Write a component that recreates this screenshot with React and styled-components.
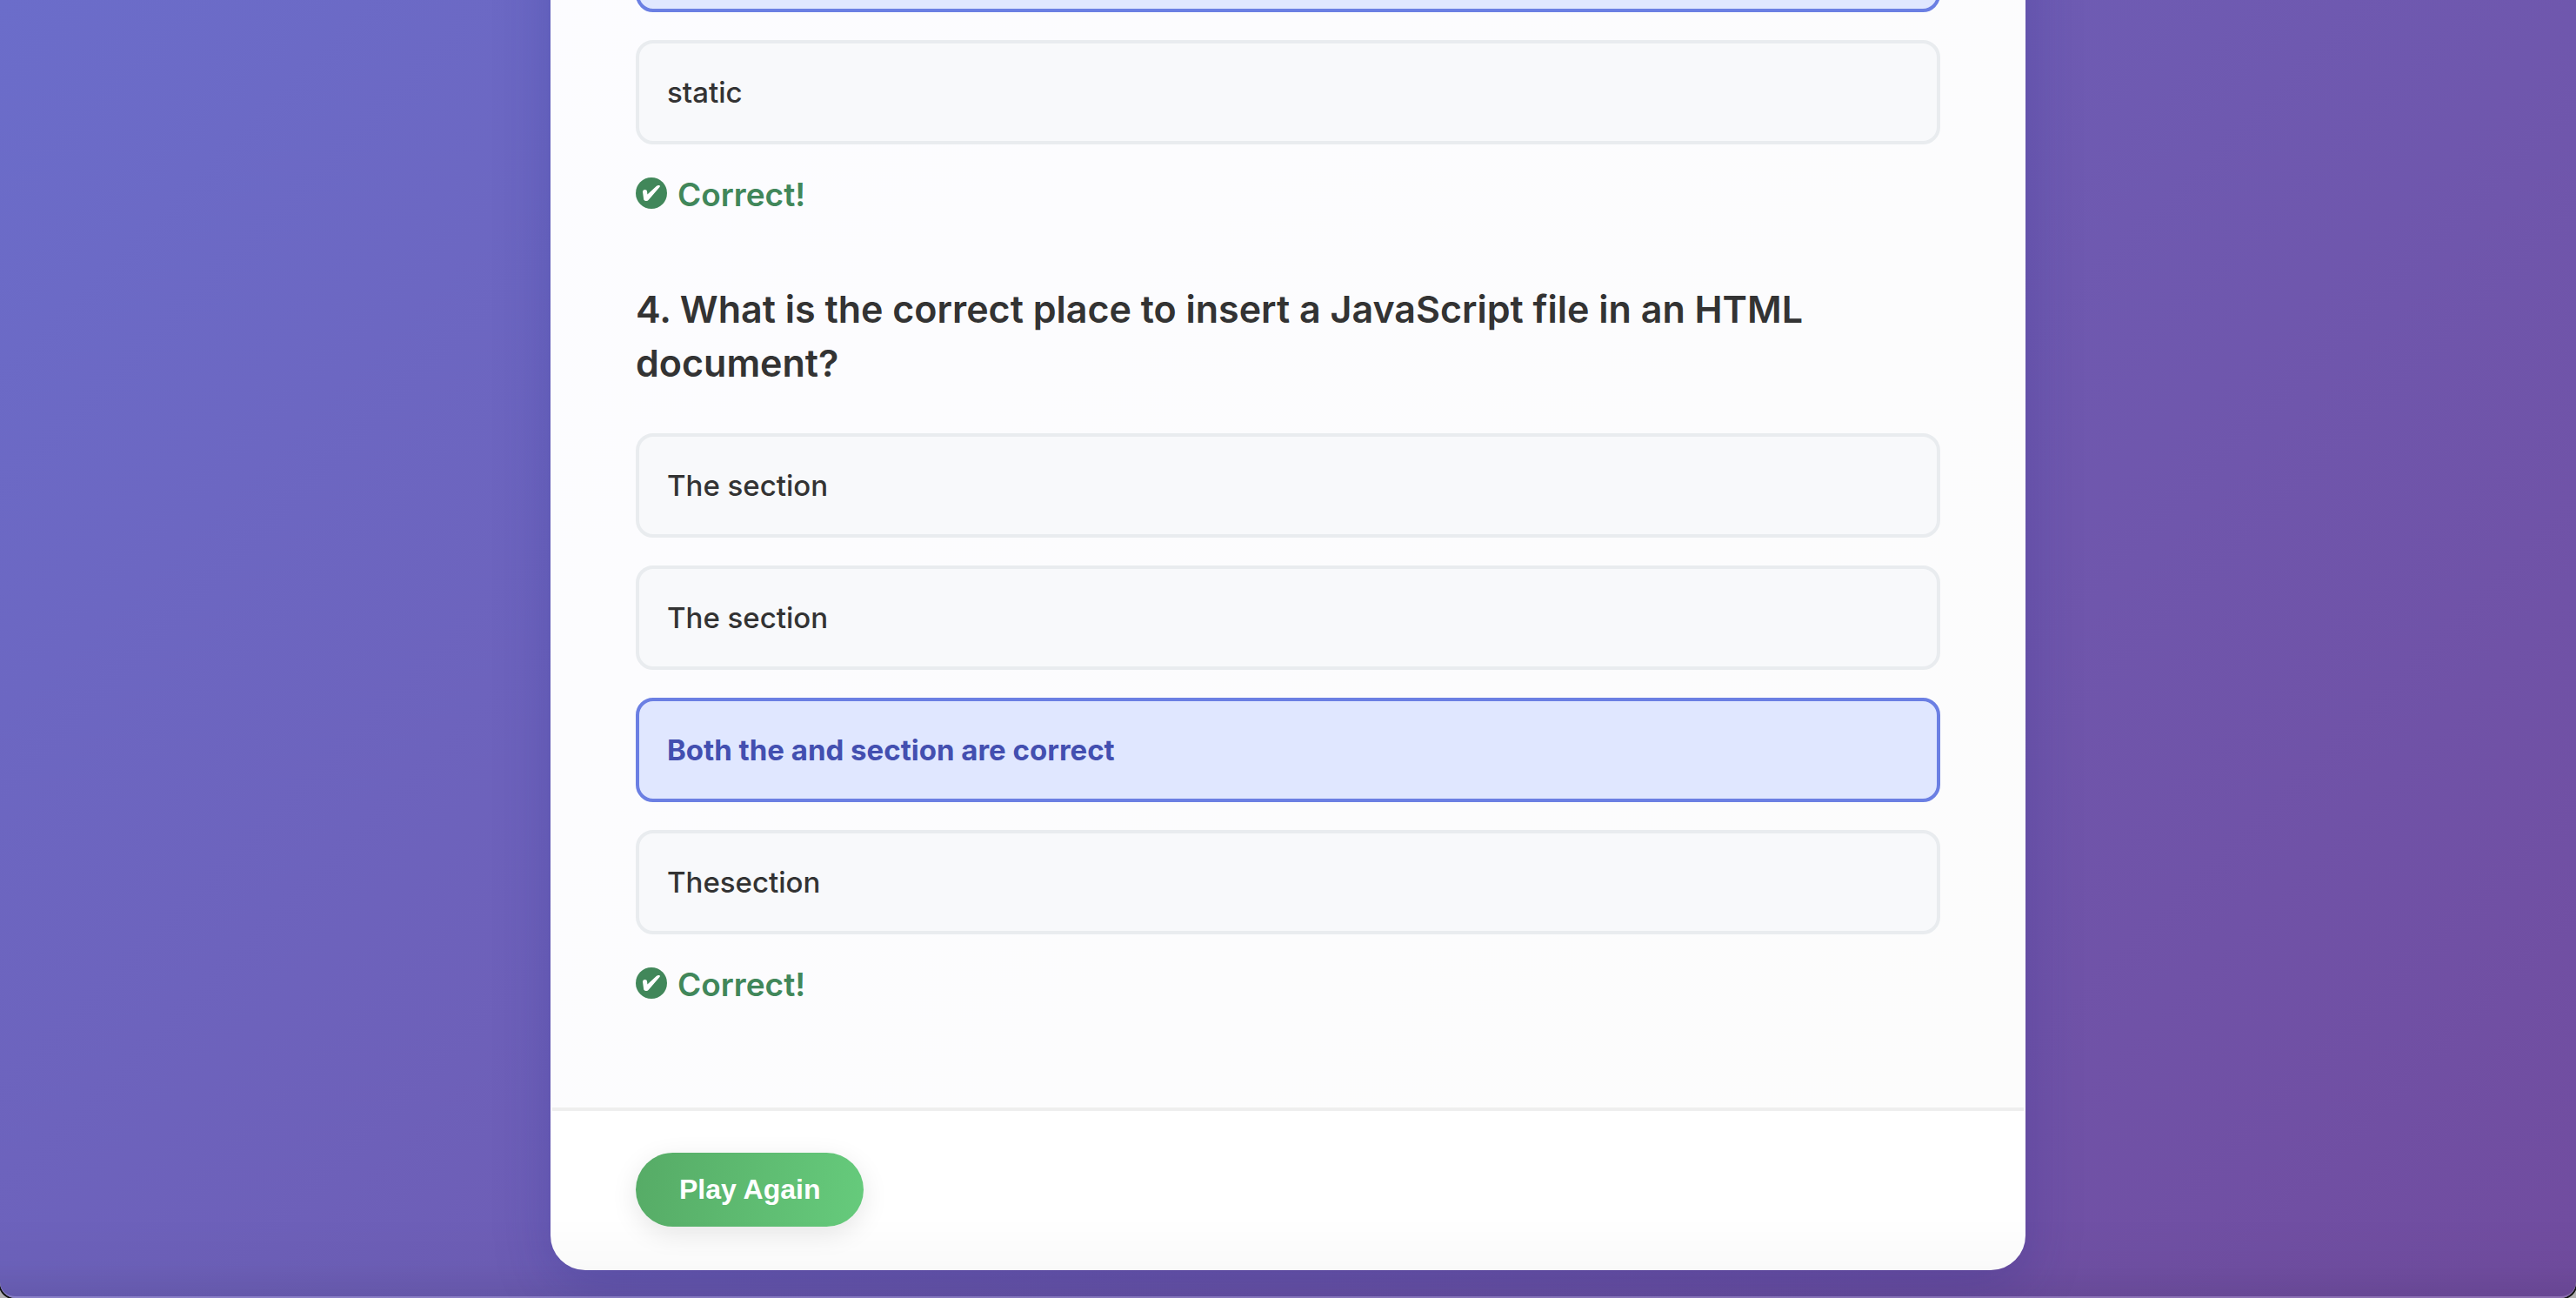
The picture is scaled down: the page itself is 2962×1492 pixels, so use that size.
import React, { useState } from "react";
import styled, { createGlobalStyle } from "styled-components";

const GlobalStyle = createGlobalStyle`
  * { box-sizing: border-box; }
  html { background: #b2b0b2; }
  body { margin: 0; font-family: Inter, "Noto Sans", sans-serif; color: #333333; }
`;

const Page = styled.div`
  position: relative;
  height: 100vh;
  overflow: hidden;
  display: flex;
  flex-direction: column;
  justify-content: flex-end;
  align-items: center;
  padding: 0 40px 32px;
  border-radius: 0 0 18px 18px;
  background: linear-gradient(135deg, #6b6dca 0%, #714c9f 100%);
  box-shadow: 0 0 0 2px #111111;

  &::after {
    content: "";
    position: absolute;
    inset: auto 0 0;
    height: 90px;
    border-bottom: 2px solid rgba(255, 255, 255, 0.2);
    border-radius: 0 0 18px 18px;
    background: linear-gradient(to bottom, rgba(0, 0, 0, 0), rgba(0, 0, 0, 0.02) 60%, rgba(0, 0, 0, 0.08));
    pointer-events: none;
  }
`;

const Card = styled.main`
  flex: none;
  width: 100%;
  max-width: 1696px;
  border: 2px solid #ffffff;
  border-radius: 40px;
  overflow: hidden;
  background: #ffffff;
  box-shadow: 0 16px 64px rgba(31, 38, 135, 0.25);
`;

const Questions = styled.div`
  display: flex;
  flex-direction: column;
  gap: 74px;
  padding: 96px 96px 115px;
  background: linear-gradient(135deg, #fcfcff 0%, #fcfcfc 100%);
`;

const Question = styled.section`
  display: flex;
  flex-direction: column;
`;

const Title = styled.h2`
  margin: 0 0 50px;
  font-size: 43px;
  line-height: 62px;
  font-weight: 600;
`;

const Options = styled.div`
  display: flex;
  flex-direction: column;
  gap: 32px;
`;

const Option = styled.button`
  height: 120px;
  padding: 0 32px;
  border: 4px solid ${(p) => (p.$selected ? "#6b7fe3" : "#e9ecef")};
  border-radius: 20px;
  background: ${(p) => (p.$selected ? "#e0e7ff" : "#f8f9fb")};
  color: ${(p) => (p.$selected ? "#434fb0" : "#333333")};
  font-family: inherit;
  font-size: 33px;
  font-weight: ${(p) => (p.$selected ? 700 : 500)};
  text-align: left;
  cursor: pointer;
`;

const Result = styled.p`
  display: flex;
  align-items: center;
  gap: 12px;
  margin: 32px 0 0;
  color: #41875a;
  font-size: 37px;
  line-height: 52px;
  font-weight: 600;
`;

const Badge = styled.svg`
  width: 36px;
  height: 36px;
  margin-bottom: 4px;
`;

const Footer = styled.footer`
  display: flex;
  padding: 48px 96px;
  border-top: 4px solid #eeeeee;
  background: #ffffff;
`;

const PlayButton = styled.button`
  padding: 24px 50px;
  border: 0;
  border-radius: 60px;
  background: linear-gradient(100deg, #56ab66, #66cb7c);
  box-shadow: 0 8px 30px rgba(0, 0, 0, 0.1);
  color: #ffffff;
  font-family: "Liberation Sans", Arial, sans-serif;
  font-size: 32px;
  line-height: 37px;
  font-weight: 700;
  cursor: pointer;
`;

function CheckBadge() {
  return (
    <Badge viewBox="0 0 36 36" aria-hidden="true">
      <circle cx="18" cy="18" r="18" fill="#41875a" />
      <path
        d="M8 16.500c0-1.500 1-2.400 2.500-2.400s2.400.8 2.600 2.300l.3 3.100L24 9.800c1-.8 2-1 3-.8.9.2 1.200 1.200.5 2L15 25.400c-1 1.200-2 1.700-3.400 1.600-1.500-.1-2.300-.8-2.500-2.200Z"
        fill="#ffffff"
      />
    </Badge>
  );
}

const quiz = [
  { id: "q3", options: ["", "static"], answer: 0 },
  {
    id: "q4",
    title: "4. What is the correct place to insert a JavaScript file in an HTML document?",
    options: ["The section", "The section", "Both the and section are correct", "Thesection"],
    answer: 2,
  },
];

function QuizQuestion({ question }) {
  const [selected, setSelected] = useState(question.answer);
  return (
    <Question>
      {question.title && <Title>{question.title}</Title>}
      <Options>
        {question.options.map((text, i) => (
          <Option
            key={i}
            type="button"
            $selected={i === selected}
            aria-pressed={i === selected}
            onClick={() => setSelected(i)}
          >
            {text}
          </Option>
        ))}
      </Options>
      {selected === question.answer && (
        <Result>
          <CheckBadge />
          Correct!
        </Result>
      )}
    </Question>
  );
}

export default function App() {
  return (
    <>
      <GlobalStyle />
      <Page>
        <Card>
          <Questions>
            {quiz.map((q) => (
              <QuizQuestion key={q.id} question={q} />
            ))}
          </Questions>
          <Footer>
            <PlayButton type="button">Play Again</PlayButton>
          </Footer>
        </Card>
      </Page>
    </>
  );
}
